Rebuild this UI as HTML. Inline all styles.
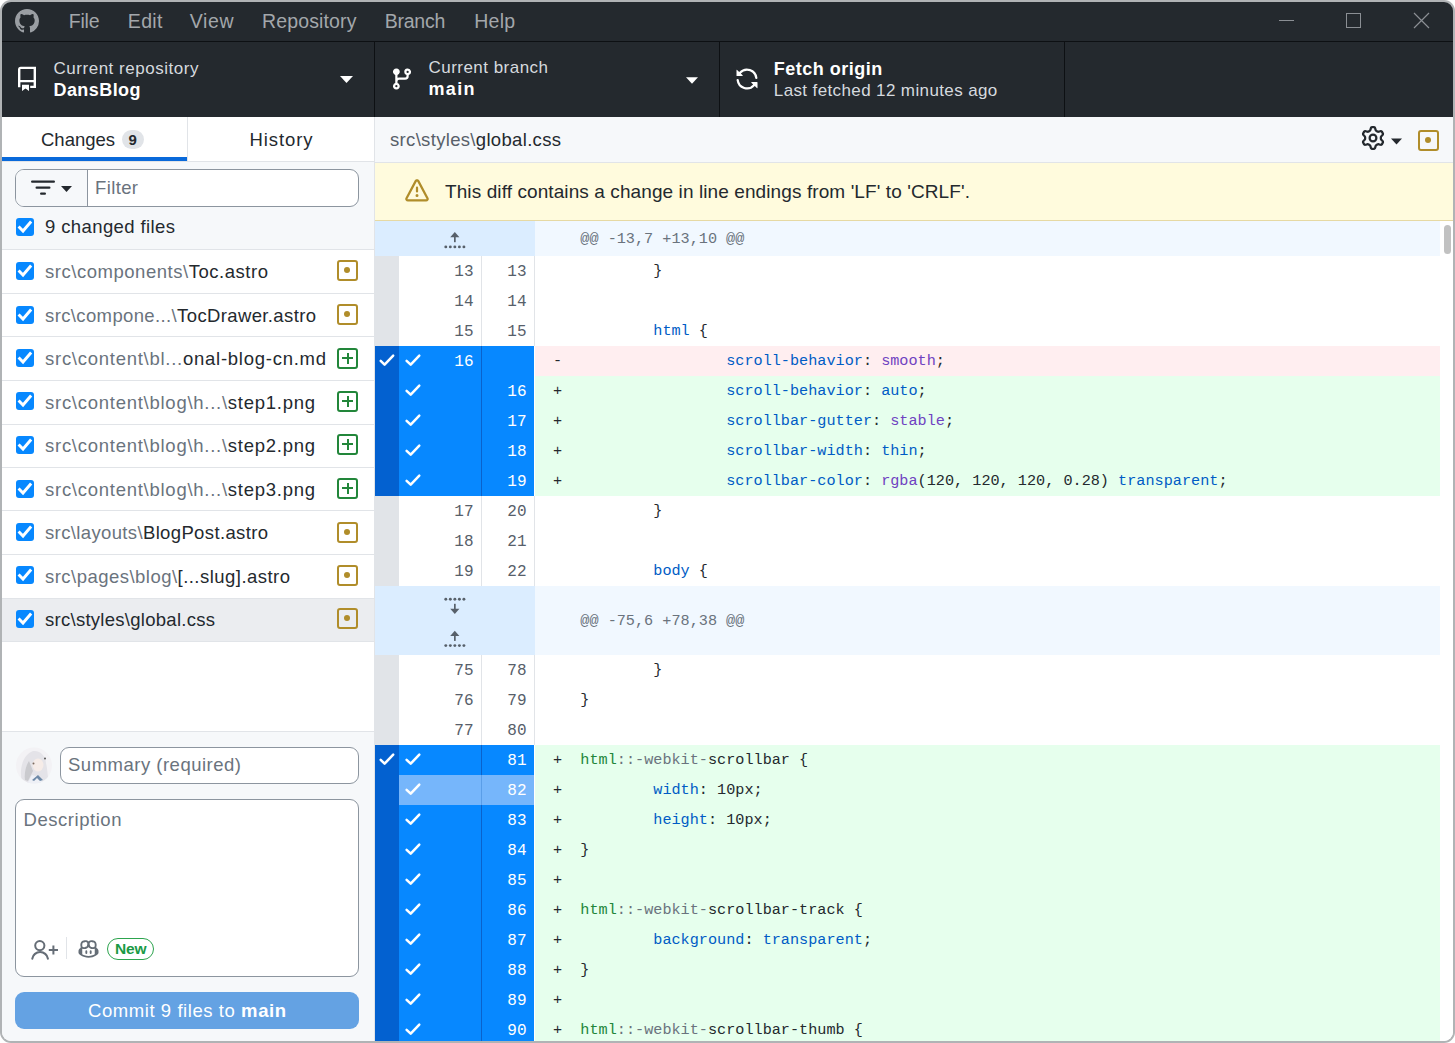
<!DOCTYPE html>
<html><head><meta charset="utf-8"><style>
html,body{margin:0;padding:0;}
body{width:1455px;height:1043px;overflow:hidden;background:#ffffff;position:relative;font-family:'Liberation Sans', sans-serif;}
#frame{position:absolute;left:0;top:0;width:1455px;height:1043px;border-radius:11px;background:#b0b3b5;overflow:hidden;}
#win{position:absolute;left:0;top:0;width:1455px;height:1043px;clip-path:inset(2px round 9px);}
#win>*{}
</style></head><body><div id="frame"><div id="win">
<div style="position:absolute;left:2px;top:2px;width:1451px;height:39px;background:#24292e;"></div>
<div style="position:absolute;left:2px;top:41px;width:1451px;height:1px;background:#0d1013;"></div>
<div style="position:absolute;left:2px;top:42px;width:1451px;height:75px;background:#24292e;"></div>
<div style="position:absolute;left:374px;top:42px;width:1px;height:75px;background:#0d1013;"></div>
<div style="position:absolute;left:719px;top:42px;width:1px;height:75px;background:#0d1013;"></div>
<div style="position:absolute;left:1064px;top:42px;width:1px;height:75px;background:#0d1013;"></div>
<svg style="position:absolute;left:15px;top:9px;" width="24" height="24" viewBox="0 0 16 16"><path fill="#9a9ea3" d="M8 0C3.58 0 0 3.58 0 8c0 3.54 2.29 6.53 5.47 7.59.4.07.55-.17.55-.38 0-.19-.01-.82-.01-1.49-2.01.37-2.530-.49-2.69-.94-.09-.23-.48-.94-.82-1.13-.28-.15-.68-.52-.01-.53.63-.01 1.08.58 1.230.82.72 1.21 1.87.87 2.33.66.07-.52.28-.87.51-1.07-1.78-.2-3.64-.89-3.64-3.95 0-.87.31-1.59.82-2.15-.08-.2-.36-1.02.08-2.12 0 0 .67-.21 2.2.82.64-.18 1.32-.27 2-.27.68 0 1.36.09 2 .27 1.53-1.04 2.2-.82 2.2-.82.44 1.1.16 1.92.08 2.12.51.56.82 1.27.82 2.15 0 3.07-1.87 3.75-3.65 3.95.29.25.54.73.54 1.48 0 1.07-.01 1.93-.01 2.2 0 .21.15.46.55.38A8.013 8.013 0 0016 8c0-4.42-3.58-8-8-8z"/></svg>
<div style="position:absolute;left:1279px;top:20px;width:15px;height:1px;background:#8b8f94"></div>
<div style="position:absolute;left:1346px;top:13px;width:13px;height:13px;border:1px solid #8b8f94"></div>
<svg style="position:absolute;left:1413px;top:12px;" width="17" height="17" viewBox="0 0 17 17"><path d="M1 1L16 16M16 1L1 16" stroke="#8b8f94" stroke-width="1.2"/></svg>
<svg style="position:absolute;left:17px;top:66px;" width="20" height="26" viewBox="0 0 20 26"><path d="M1 21.3V3.6Q1 0.7 3.8 0.7H19V22H13.2V19.7H16.6V16.2H3.4V21.3Z M3.4 3.1V14H16.6V3.1Z" fill="#fff" fill-rule="evenodd"/><path d="M5 18.7H12V25L8.5 22.6L5 25Z" fill="#fff"/></svg>
<svg style="position:absolute;left:390px;top:67px;" width="24" height="24" viewBox="0 0 16 16"><path fill="#fff" d="M11.75 2.5a.75.75 0 100 1.5.75.75 0 000-1.5zm-2.25.75a2.25 2.25 0 113 2.122V6A2.5 2.5 0 0110 8.5H6a1 1 0 00-1 1v1.128a2.251 2.251 0 11-1.5 0V5.372a2.25 2.25 0 111.5 0v1.836A2.492 2.492 0 016 7h4a1 1 0 001-1v-.628A2.25 2.25 0 019.5 3.25zM4.25 12a.75.75 0 100 1.5.75.75 0 000-1.5zM3.5 3.25a.75.75 0 111.5 0 .75.75 0 01-1.5 0z"/></svg>
<svg style="position:absolute;left:735px;top:67px;" width="24" height="24" viewBox="0 0 16 16"><path fill="#fff" d="M1.705 8.005a.75.75 0 0 1 .834.656 5.5 5.5 0 0 0 9.592 2.97l-1.204-1.204a.25.25 0 0 1 .177-.427h3.646a.25.25 0 0 1 .25.25v3.646a.25.25 0 0 1-.427.177l-1.38-1.38A7.002 7.002 0 0 1 1.05 8.84a.75.75 0 0 1 .656-.834ZM8 2.5a5.487 5.487 0 0 0-4.131 1.869l1.204 1.204A.25.25 0 0 1 4.896 6H1.25A.25.25 0 0 1 1 5.75V2.104a.25.25 0 0 1 .427-.177l1.38 1.38A7.002 7.002 0 0 1 14.95 7.16a.75.75 0 0 1-1.49.178A5.5 5.5 0 0 0 8 2.5Z"/></svg>
<svg style="position:absolute;left:340px;top:76px;" width="13" height="7" viewBox="0 0 13 7"><path d="M0 0h13L6.5 7z" fill="#fff"/></svg>
<svg style="position:absolute;left:686px;top:77px;" width="12" height="7" viewBox="0 0 13 7"><path d="M0 0h13L6.5 7z" fill="#fff"/></svg>
<div style="position:absolute;left:2px;top:117px;width:372px;height:924px;background:#ffffff;"></div>
<div style="position:absolute;left:2px;top:117px;width:372px;height:44px;background:#ffffff;"></div>
<div style="position:absolute;left:187px;top:117px;width:1px;height:44px;background:#e1e4e8;"></div>
<div style="position:absolute;left:2px;top:161px;width:372px;height:1px;background:#e1e4e8;"></div>
<div style="position:absolute;left:2px;top:157px;width:185px;height:4px;background:#0969da;"></div>
<div style="position:absolute;left:122px;top:130px;width:22px;height:19px;border-radius:10px;background:#e1e4e8"></div>
<div style="position:absolute;left:2px;top:162px;width:372px;height:87px;background:#f6f8fa;"></div>
<div style="position:absolute;left:2px;top:249px;width:372px;height:1px;background:#e1e4e8;"></div>
<div style="position:absolute;left:15px;top:169px;width:342px;height:36px;border:1px solid #8c959f;border-radius:9px;background:#fff;overflow:hidden"><div style="position:absolute;left:0;top:0;width:71px;height:36px;background:#f6f8fa;border-right:1px solid #8c959f"></div></div>
<svg style="position:absolute;left:31px;top:176px;" width="24" height="24" viewBox="0 0 16 16"><path fill="#24292e" d="M.75 3h14.5a.75.75 0 0 1 0 1.5H.75a.75.75 0 0 1 0-1.5ZM3 7.75A.75.75 0 0 1 3.75 7h8.5a.75.75 0 0 1 0 1.5h-8.5A.75.75 0 0 1 3 7.75Zm3 4a.75.75 0 0 1 .75-.75h2.5a.75.75 0 0 1 0 1.5h-2.5a.75.75 0 0 1-.75-.75Z"/></svg>
<svg style="position:absolute;left:61px;top:186px;" width="11" height="6" viewBox="0 0 13 7"><path d="M0 0h13L6.5 7z" fill="#24292e"/></svg>
<div style="position:absolute;left:16px;top:218px;width:18px;height:18px;border-radius:3px;background:#0788ff"></div>
<svg style="position:absolute;left:16px;top:218px;" width="18" height="18" viewBox="0 0 18 18"><path d="M3.6 9.6L7 13L14.2 4.6" fill="none" stroke="#fff" stroke-width="2.9" stroke-linecap="square" stroke-linejoin="miter"/></svg>
<div style="position:absolute;left:2px;top:251px;width:372px;height:42px;background:#ffffff;"></div>
<div style="position:absolute;left:2px;top:293px;width:372px;height:1px;background:#e1e4e8;"></div>
<div style="position:absolute;left:16px;top:262px;width:18px;height:18px;border-radius:3px;background:#0788ff"></div>
<svg style="position:absolute;left:16px;top:262px;" width="18" height="18" viewBox="0 0 18 18"><path d="M3.6 9.6L7 13L14.2 4.6" fill="none" stroke="#fff" stroke-width="2.9" stroke-linecap="square" stroke-linejoin="miter"/></svg>
<div style="position:absolute;left:337px;top:260px;width:17px;height:17px;border:2px solid #b08d2a;border-radius:3px"></div>
<div style="position:absolute;left:344px;top:267px;width:6px;height:6px;border-radius:50%;background:#b08d2a"></div>
<div style="position:absolute;left:2px;top:294px;width:372px;height:42px;background:#ffffff;"></div>
<div style="position:absolute;left:2px;top:336px;width:372px;height:1px;background:#e1e4e8;"></div>
<div style="position:absolute;left:16px;top:306px;width:18px;height:18px;border-radius:3px;background:#0788ff"></div>
<svg style="position:absolute;left:16px;top:306px;" width="18" height="18" viewBox="0 0 18 18"><path d="M3.6 9.6L7 13L14.2 4.6" fill="none" stroke="#fff" stroke-width="2.9" stroke-linecap="square" stroke-linejoin="miter"/></svg>
<div style="position:absolute;left:337px;top:304px;width:17px;height:17px;border:2px solid #b08d2a;border-radius:3px"></div>
<div style="position:absolute;left:344px;top:311px;width:6px;height:6px;border-radius:50%;background:#b08d2a"></div>
<div style="position:absolute;left:2px;top:337px;width:372px;height:43px;background:#ffffff;"></div>
<div style="position:absolute;left:2px;top:380px;width:372px;height:1px;background:#e1e4e8;"></div>
<div style="position:absolute;left:16px;top:349px;width:18px;height:18px;border-radius:3px;background:#0788ff"></div>
<svg style="position:absolute;left:16px;top:349px;" width="18" height="18" viewBox="0 0 18 18"><path d="M3.6 9.6L7 13L14.2 4.6" fill="none" stroke="#fff" stroke-width="2.9" stroke-linecap="square" stroke-linejoin="miter"/></svg>
<div style="position:absolute;left:337px;top:348px;width:17px;height:17px;border:2px solid #22863a;border-radius:3px"></div>
<div style="position:absolute;left:342px;top:357px;width:11px;height:2px;background:#22863a"></div>
<div style="position:absolute;left:346.5px;top:352.5px;width:2px;height:11px;background:#22863a"></div>
<div style="position:absolute;left:2px;top:381px;width:372px;height:43px;background:#ffffff;"></div>
<div style="position:absolute;left:2px;top:424px;width:372px;height:1px;background:#e1e4e8;"></div>
<div style="position:absolute;left:16px;top:392px;width:18px;height:18px;border-radius:3px;background:#0788ff"></div>
<svg style="position:absolute;left:16px;top:392px;" width="18" height="18" viewBox="0 0 18 18"><path d="M3.6 9.6L7 13L14.2 4.6" fill="none" stroke="#fff" stroke-width="2.9" stroke-linecap="square" stroke-linejoin="miter"/></svg>
<div style="position:absolute;left:337px;top:391px;width:17px;height:17px;border:2px solid #22863a;border-radius:3px"></div>
<div style="position:absolute;left:342px;top:400px;width:11px;height:2px;background:#22863a"></div>
<div style="position:absolute;left:346.5px;top:395.5px;width:2px;height:11px;background:#22863a"></div>
<div style="position:absolute;left:2px;top:425px;width:372px;height:42px;background:#ffffff;"></div>
<div style="position:absolute;left:2px;top:467px;width:372px;height:1px;background:#e1e4e8;"></div>
<div style="position:absolute;left:16px;top:436px;width:18px;height:18px;border-radius:3px;background:#0788ff"></div>
<svg style="position:absolute;left:16px;top:436px;" width="18" height="18" viewBox="0 0 18 18"><path d="M3.6 9.6L7 13L14.2 4.6" fill="none" stroke="#fff" stroke-width="2.9" stroke-linecap="square" stroke-linejoin="miter"/></svg>
<div style="position:absolute;left:337px;top:434px;width:17px;height:17px;border:2px solid #22863a;border-radius:3px"></div>
<div style="position:absolute;left:342px;top:443px;width:11px;height:2px;background:#22863a"></div>
<div style="position:absolute;left:346.5px;top:438.5px;width:2px;height:11px;background:#22863a"></div>
<div style="position:absolute;left:2px;top:468px;width:372px;height:42px;background:#ffffff;"></div>
<div style="position:absolute;left:2px;top:510px;width:372px;height:1px;background:#e1e4e8;"></div>
<div style="position:absolute;left:16px;top:480px;width:18px;height:18px;border-radius:3px;background:#0788ff"></div>
<svg style="position:absolute;left:16px;top:480px;" width="18" height="18" viewBox="0 0 18 18"><path d="M3.6 9.6L7 13L14.2 4.6" fill="none" stroke="#fff" stroke-width="2.9" stroke-linecap="square" stroke-linejoin="miter"/></svg>
<div style="position:absolute;left:337px;top:478px;width:17px;height:17px;border:2px solid #22863a;border-radius:3px"></div>
<div style="position:absolute;left:342px;top:487px;width:11px;height:2px;background:#22863a"></div>
<div style="position:absolute;left:346.5px;top:482.5px;width:2px;height:11px;background:#22863a"></div>
<div style="position:absolute;left:2px;top:511px;width:372px;height:43px;background:#ffffff;"></div>
<div style="position:absolute;left:2px;top:554px;width:372px;height:1px;background:#e1e4e8;"></div>
<div style="position:absolute;left:16px;top:523px;width:18px;height:18px;border-radius:3px;background:#0788ff"></div>
<svg style="position:absolute;left:16px;top:523px;" width="18" height="18" viewBox="0 0 18 18"><path d="M3.6 9.6L7 13L14.2 4.6" fill="none" stroke="#fff" stroke-width="2.9" stroke-linecap="square" stroke-linejoin="miter"/></svg>
<div style="position:absolute;left:337px;top:522px;width:17px;height:17px;border:2px solid #b08d2a;border-radius:3px"></div>
<div style="position:absolute;left:344px;top:529px;width:6px;height:6px;border-radius:50%;background:#b08d2a"></div>
<div style="position:absolute;left:2px;top:555px;width:372px;height:43px;background:#ffffff;"></div>
<div style="position:absolute;left:2px;top:598px;width:372px;height:1px;background:#e1e4e8;"></div>
<div style="position:absolute;left:16px;top:566px;width:18px;height:18px;border-radius:3px;background:#0788ff"></div>
<svg style="position:absolute;left:16px;top:566px;" width="18" height="18" viewBox="0 0 18 18"><path d="M3.6 9.6L7 13L14.2 4.6" fill="none" stroke="#fff" stroke-width="2.9" stroke-linecap="square" stroke-linejoin="miter"/></svg>
<div style="position:absolute;left:337px;top:565px;width:17px;height:17px;border:2px solid #b08d2a;border-radius:3px"></div>
<div style="position:absolute;left:344px;top:572px;width:6px;height:6px;border-radius:50%;background:#b08d2a"></div>
<div style="position:absolute;left:2px;top:599px;width:372px;height:42px;background:#ebedf0;"></div>
<div style="position:absolute;left:2px;top:641px;width:372px;height:1px;background:#e1e4e8;"></div>
<div style="position:absolute;left:16px;top:610px;width:18px;height:18px;border-radius:3px;background:#0788ff"></div>
<svg style="position:absolute;left:16px;top:610px;" width="18" height="18" viewBox="0 0 18 18"><path d="M3.6 9.6L7 13L14.2 4.6" fill="none" stroke="#fff" stroke-width="2.9" stroke-linecap="square" stroke-linejoin="miter"/></svg>
<div style="position:absolute;left:337px;top:608px;width:17px;height:17px;border:2px solid #b08d2a;border-radius:3px"></div>
<div style="position:absolute;left:344px;top:615px;width:6px;height:6px;border-radius:50%;background:#b08d2a"></div>
<div style="position:absolute;left:2px;top:731px;width:372px;height:1px;background:#e1e4e8;"></div>
<div style="position:absolute;left:2px;top:732px;width:372px;height:309px;background:#f6f8fa;"></div>
<svg style="position:absolute;left:16px;top:747px" width="36" height="37" viewBox="0 0 36 37"><defs><clipPath id="av"><circle cx="18" cy="18.5" r="18"/></clipPath></defs><g clip-path="url(#av)"><rect width="36" height="37" fill="#f3f2f5"/><path d="M6 34C3 24 6 8 17 4C24 3 30 9 30 16C32 24 31 30 34 36H6Z" fill="#e4e3e8"/><path d="M9 33C8 26 10 18 13 14L17 24L12 34Z" fill="#cacace"/><ellipse cx="22" cy="18" rx="5.5" ry="6.5" fill="#f6ece8"/><path d="M11 37L16 28L23 30L29 37Z" fill="#eef0f6"/><path d="M22 28L27 33L24 34L21 31L18 34L16 33Z" fill="#6f8aa8"/><circle cx="17.5" cy="16.5" r="1" fill="#7a6a60"/><circle cx="29" cy="11.5" r="1" fill="#555"/></g></svg>
<div style="position:absolute;left:60px;top:747px;width:297px;height:35px;border:1px solid #8c959f;border-radius:9px;background:#fff"></div>
<div style="position:absolute;left:15px;top:799px;width:342px;height:176px;border:1px solid #8c959f;border-radius:9px;background:#fff"></div>
<svg style="position:absolute;left:0;top:0" width="1455" height="1043" viewBox="0 0 1455 1043"><circle cx="39.8" cy="945.6" r="4.6" fill="none" stroke="#656d76" stroke-width="2"/><path d="M32.3 958.6A7.9 7.9 0 0 1 47.9 958.6" fill="none" stroke="#656d76" stroke-width="2.1" stroke-linecap="round"/><path d="M48.8 950H58M53.4 945.4V954.6" stroke="#656d76" stroke-width="2"/></svg>
<div style="position:absolute;left:66px;top:937px;width:1px;height:22px;background:#e1e4e8;"></div>
<svg style="position:absolute;left:78px;top:939px;" width="21" height="20" viewBox="0 0 16 16"><path fill="#656d76" d="M7.998 15.035c-4.562 0-7.873-2.914-7.998-3.749V9.338c.085-.628.677-1.686 1.588-2.065.013-.07.024-.143.036-.218.029-.183.06-.384.126-.612-.201-.508-.254-1.084-.254-1.656 0-.87.128-1.769.693-2.484.579-.733 1.494-1.124 2.724-1.261 1.206-.134 2.262.034 2.944.765.05.053.096.108.139.165.044-.057.094-.112.143-.165.682-.731 1.738-.899 2.944-.765 1.23.137 2.145.528 2.724 1.261.566.715.693 1.614.693 2.484 0 .572-.053 1.148-.254 1.656.066.228.098.429.126.612.012.076.024.148.037.218.924.385 1.522 1.471 1.591 2.095v1.872c0 .766-3.351 3.795-8.002 3.795Zm0-1.485c2.28 0 4.584-1.11 5.002-1.433V7.862l-.023-.116c-.49.21-1.075.291-1.727.291-1.146 0-2.059-.327-2.710-.991A3.222 3.222 0 0 1 8 6.303a3.24 3.24 0 0 1-.544.743c-.65.664-1.563.991-2.71.991-.652 0-1.236-.081-1.727-.291l-.023.116v4.255c.419.323 2.722 1.433 5.002 1.433ZM6.762 2.83c-.193-.206-.637-.413-1.682-.297-1.019.113-1.479.404-1.713.7-.247.312-.369.789-.369 1.554 0 .793.129 1.171.308 1.371.162.181.519.379 1.442.379.853 0 1.339-.235 1.638-.54.315-.322.527-.827.617-1.553.117-.935-.037-1.395-.241-1.614Zm4.155-.297c-1.044-.116-1.488.091-1.681.297-.204.219-.359.679-.242 1.614.091.726.303 1.231.618 1.553.299.305.784.54 1.638.54.922 0 1.28-.198 1.442-.379.179-.2.308-.578.308-1.371 0-.765-.123-1.242-.37-1.554-.233-.296-.693-.587-1.713-.7Z M6.25 9.037a.75.75 0 0 1 .75.75v1.501a.75.75 0 0 1-1.5 0V9.787a.75.75 0 0 1 .75-.75Zm4.25.75v1.501a.75.75 0 0 1-1.5 0V9.787a.75.75 0 0 1 1.5 0Z"/></svg>
<div style="position:absolute;left:107px;top:938px;width:45px;height:20px;border:1px solid #2da44e;border-radius:11px"></div>
<div style="position:absolute;left:15px;top:992px;width:344px;height:37px;border-radius:9px;background:#64a2e3"></div>
<div style="position:absolute;left:374px;top:117px;width:1px;height:924px;background:#e1e4e8;"></div>
<div style="position:absolute;left:375px;top:117px;width:1078px;height:45px;background:#f6f8fa;"></div>
<div style="position:absolute;left:375px;top:162px;width:1078px;height:1px;background:#e1e4e8;"></div>
<svg style="position:absolute;left:1361px;top:126px;" width="24" height="24" viewBox="0 0 16 16"><path fill="#24292e" d="M8 0a8.2 8.2 0 0 1 .701.031C9.444.095 9.99.645 10.16 1.29l.288 1.107c.018.066.079.158.212.224.231.114.454.243.668.386.123.082.233.09.299.071l1.103-.303c.644-.176 1.392.021 1.82.63.27.385.506.792.704 1.218.315.675.111 1.422-.364 1.891l-.814.806c-.049.048-.098.147-.088.294.016.257.016.515 0 .772-.01.147.038.246.088.294l.814.806c.475.469.679 1.216.364 1.891a7.977 7.977 0 0 1-.704 1.217c-.428.61-1.176.807-1.82.63l-1.102-.302c-.067-.019-.177-.011-.3.071a5.909 5.909 0 0 1-.668.386c-.133.066-.194.158-.211.224l-.29 1.106c-.168.646-.715 1.196-1.458 1.26a8.006 8.006 0 0 1-1.402 0c-.743-.064-1.289-.614-1.458-1.26l-.289-1.106c-.018-.066-.079-.158-.212-.224a5.738 5.738 0 0 1-.668-.386c-.123-.082-.233-.09-.299-.071l-1.103.303c-.644.176-1.392-.021-1.820-.63a8.12 8.12 0 0 1-.704-1.218c-.315-.675-.111-1.422.363-1.891l.815-.806c.05-.048.098-.147.088-.294a6.214 6.214 0 0 1 0-.772c.01-.147-.038-.246-.088-.294l-.815-.806C.635 6.045.431 5.298.746 4.623a7.92 7.920 0 0 1 .704-1.217c.428-.61 1.176-.807 1.82-.63l1.102.302c.067.019.177.011.3-.071.214-.143.437-.272.668-.386.133-.066.194-.158.211-.224l.29-1.106C6.009.645 6.556.095 7.299.03 7.53.01 7.764 0 8 0Zm-.571 1.525c-.036.003-.108.036-.137.146l-.289 1.105c-.147.561-.549.967-.998 1.189-.173.086-.34.183-.5.29-.417.278-.97.423-1.529.27l-1.103-.303c-.109-.03-.175.016-.195.045-.22.312-.412.644-.573.99-.014.031-.021.11.059.19l.815.806c.411.406.562.957.53 1.456a4.709 4.709 0 0 0 0 .582c.032.499-.119 1.05-.53 1.456l-.815.806c-.081.08-.073.159-.059.19.162.346.353.677.573.989.02.03.085.076.195.046l1.102-.303c.56-.153 1.113-.008 1.53.27.161.107.328.204.501.29.447.222.85.629.997 1.189l.289 1.105c.029.109.101.143.137.146a6.6 6.6 0 0 0 1.142 0c.036-.003.108-.036.137-.146l.289-1.105c.147-.561.549-.967.998-1.189.173-.086.34-.183.5-.29.417-.278.97-.423 1.529-.27l1.103.303c.109.029.175-.016.195-.045.22-.313.411-.644.573-.99.014-.031.021-.11-.059-.19l-.815-.806c-.411-.406-.562-.957-.53-1.456a4.709 4.709 0 0 0 0-.582c-.032-.499.119-1.05.53-1.456l.815-.806c.081-.08.073-.159.059-.19a6.464 6.464 0 0 0-.573-.989c-.02-.03-.085-.076-.195-.046l-1.102.303c-.56.153-1.113.008-1.53-.27a4.44 4.44 0 0 0-.501-.29c-.447-.222-.85-.629-.997-1.189l-.289-1.105c-.029-.11-.101-.143-.137-.146a6.6 6.6 0 0 0-1.142 0ZM11 8a3 3 0 1 1-6 0 3 3 0 0 1 6 0ZM9.5 8a1.5 1.5 0 1 0-3.001.001A1.5 1.5 0 0 0 9.5 8Z"/></svg>
<svg style="position:absolute;left:1391px;top:138px;" width="11" height="7" viewBox="0 0 13 7"><path d="M0 0h13L6.5 7z" fill="#24292e"/></svg>
<div style="position:absolute;left:1418px;top:130px;width:17px;height:17px;border:2px solid #b08d2a;border-radius:3px"></div>
<div style="position:absolute;left:1425px;top:137px;width:6px;height:6px;border-radius:50%;background:#b08d2a"></div>
<div style="position:absolute;left:375px;top:163px;width:1078px;height:57px;background:#fffbdd;"></div>
<div style="position:absolute;left:375px;top:220px;width:1078px;height:1px;background:#e6d9a3;"></div>
<svg style="position:absolute;left:405px;top:179px;" width="24" height="24" viewBox="0 0 16 16"><path fill="#b08d2a" d="M6.457 1.047c.659-1.234 2.427-1.234 3.086 0l6.082 11.378A1.75 1.75 0 0 1 14.082 15H1.918a1.75 1.75 0 0 1-1.543-2.575Zm1.763.707a.25.25 0 0 0-.44 0L1.698 13.132a.25.25 0 0 0 .22.368h12.164a.25.25 0 0 0 .22-.368Zm.53 3.996v2.5a.75.75 0 0 1-1.5 0v-2.5a.75.75 0 0 1 1.5 0ZM9 11a1 1 0 1 1-2 0 1 1 0 0 1 2 0Z"/></svg>
<div style="position:absolute;left:375px;top:221px;width:1078px;height:820px;background:#ffffff;"></div>
<div style="position:absolute;left:1440px;top:221px;width:13px;height:820px;background:#ffffff;"></div>
<div style="position:absolute;left:1444px;top:225px;width:7px;height:29px;border-radius:4px;background:#c1c1c1"></div>
<div style="position:absolute;left:375px;top:221px;width:160px;height:35px;background:#dbedff;"></div>
<div style="position:absolute;left:535px;top:221px;width:905px;height:35px;background:#f1f8ff;"></div>
<svg style="position:absolute;left:0;top:0" width="1455" height="1043" viewBox="0 0 1455 1043"><path d="M450.2 237.30L459.4 237.30L454.8 232.00Z" fill="#57606a"/><rect x="454" y="237.00" width="1.7" height="5.2" fill="#57606a"/><circle cx="445.80" cy="246.90" r="1.45" fill="#57606a"/><circle cx="450.33" cy="246.90" r="1.45" fill="#57606a"/><circle cx="454.86" cy="246.90" r="1.45" fill="#57606a"/><circle cx="459.39" cy="246.90" r="1.45" fill="#57606a"/><circle cx="463.92" cy="246.90" r="1.45" fill="#57606a"/></svg>
<div style="position:absolute;left:375px;top:256px;width:24px;height:30px;background:#e1e4e8;"></div>
<div style="position:absolute;left:399px;top:256px;width:82px;height:30px;background:#ffffff;"></div>
<div style="position:absolute;left:481px;top:256px;width:1px;height:30px;background:#e1e4e8;"></div>
<div style="position:absolute;left:482px;top:256px;width:52px;height:30px;background:#ffffff;"></div>
<div style="position:absolute;left:534px;top:256px;width:1px;height:30px;background:#e1e4e8;"></div>
<div style="position:absolute;left:535px;top:256px;width:905px;height:30px;background:#ffffff;"></div>
<div style="position:absolute;left:375px;top:286px;width:24px;height:30px;background:#e1e4e8;"></div>
<div style="position:absolute;left:399px;top:286px;width:82px;height:30px;background:#ffffff;"></div>
<div style="position:absolute;left:481px;top:286px;width:1px;height:30px;background:#e1e4e8;"></div>
<div style="position:absolute;left:482px;top:286px;width:52px;height:30px;background:#ffffff;"></div>
<div style="position:absolute;left:534px;top:286px;width:1px;height:30px;background:#e1e4e8;"></div>
<div style="position:absolute;left:535px;top:286px;width:905px;height:30px;background:#ffffff;"></div>
<div style="position:absolute;left:375px;top:316px;width:24px;height:30px;background:#e1e4e8;"></div>
<div style="position:absolute;left:399px;top:316px;width:82px;height:30px;background:#ffffff;"></div>
<div style="position:absolute;left:481px;top:316px;width:1px;height:30px;background:#e1e4e8;"></div>
<div style="position:absolute;left:482px;top:316px;width:52px;height:30px;background:#ffffff;"></div>
<div style="position:absolute;left:534px;top:316px;width:1px;height:30px;background:#e1e4e8;"></div>
<div style="position:absolute;left:535px;top:316px;width:905px;height:30px;background:#ffffff;"></div>
<div style="position:absolute;left:375px;top:346px;width:24px;height:30px;background:#0361d0;"></div>
<div style="position:absolute;left:399px;top:346px;width:82px;height:30px;background:#0788ff;"></div>
<div style="position:absolute;left:481px;top:346px;width:1px;height:30px;background:#0a62cc;"></div>
<div style="position:absolute;left:482px;top:346px;width:52px;height:30px;background:#0788ff;"></div>
<div style="position:absolute;left:535px;top:346px;width:905px;height:30px;background:#ffeef0;"></div>
<svg style="position:absolute;left:400px;top:346px;" width="24" height="30" viewBox="0 0 24 30"><path d="M6.6 14.8L10.7 18.7L19.3 9.6" fill="none" stroke="#fff" stroke-width="2.5" stroke-linecap="round" stroke-linejoin="round"/></svg>
<div style="position:absolute;left:375px;top:376px;width:24px;height:30px;background:#0361d0;"></div>
<div style="position:absolute;left:399px;top:376px;width:82px;height:30px;background:#0788ff;"></div>
<div style="position:absolute;left:481px;top:376px;width:1px;height:30px;background:#0a62cc;"></div>
<div style="position:absolute;left:482px;top:376px;width:52px;height:30px;background:#0788ff;"></div>
<div style="position:absolute;left:535px;top:376px;width:905px;height:30px;background:#e6ffed;"></div>
<svg style="position:absolute;left:400px;top:376px;" width="24" height="30" viewBox="0 0 24 30"><path d="M6.6 14.8L10.7 18.7L19.3 9.6" fill="none" stroke="#fff" stroke-width="2.5" stroke-linecap="round" stroke-linejoin="round"/></svg>
<div style="position:absolute;left:375px;top:406px;width:24px;height:30px;background:#0361d0;"></div>
<div style="position:absolute;left:399px;top:406px;width:82px;height:30px;background:#0788ff;"></div>
<div style="position:absolute;left:481px;top:406px;width:1px;height:30px;background:#0a62cc;"></div>
<div style="position:absolute;left:482px;top:406px;width:52px;height:30px;background:#0788ff;"></div>
<div style="position:absolute;left:535px;top:406px;width:905px;height:30px;background:#e6ffed;"></div>
<svg style="position:absolute;left:400px;top:406px;" width="24" height="30" viewBox="0 0 24 30"><path d="M6.6 14.8L10.7 18.7L19.3 9.6" fill="none" stroke="#fff" stroke-width="2.5" stroke-linecap="round" stroke-linejoin="round"/></svg>
<div style="position:absolute;left:375px;top:436px;width:24px;height:30px;background:#0361d0;"></div>
<div style="position:absolute;left:399px;top:436px;width:82px;height:30px;background:#0788ff;"></div>
<div style="position:absolute;left:481px;top:436px;width:1px;height:30px;background:#0a62cc;"></div>
<div style="position:absolute;left:482px;top:436px;width:52px;height:30px;background:#0788ff;"></div>
<div style="position:absolute;left:535px;top:436px;width:905px;height:30px;background:#e6ffed;"></div>
<svg style="position:absolute;left:400px;top:436px;" width="24" height="30" viewBox="0 0 24 30"><path d="M6.6 14.8L10.7 18.7L19.3 9.6" fill="none" stroke="#fff" stroke-width="2.5" stroke-linecap="round" stroke-linejoin="round"/></svg>
<div style="position:absolute;left:375px;top:466px;width:24px;height:30px;background:#0361d0;"></div>
<div style="position:absolute;left:399px;top:466px;width:82px;height:30px;background:#0788ff;"></div>
<div style="position:absolute;left:481px;top:466px;width:1px;height:30px;background:#0a62cc;"></div>
<div style="position:absolute;left:482px;top:466px;width:52px;height:30px;background:#0788ff;"></div>
<div style="position:absolute;left:535px;top:466px;width:905px;height:30px;background:#e6ffed;"></div>
<svg style="position:absolute;left:400px;top:466px;" width="24" height="30" viewBox="0 0 24 30"><path d="M6.6 14.8L10.7 18.7L19.3 9.6" fill="none" stroke="#fff" stroke-width="2.5" stroke-linecap="round" stroke-linejoin="round"/></svg>
<div style="position:absolute;left:375px;top:496px;width:24px;height:30px;background:#e1e4e8;"></div>
<div style="position:absolute;left:399px;top:496px;width:82px;height:30px;background:#ffffff;"></div>
<div style="position:absolute;left:481px;top:496px;width:1px;height:30px;background:#e1e4e8;"></div>
<div style="position:absolute;left:482px;top:496px;width:52px;height:30px;background:#ffffff;"></div>
<div style="position:absolute;left:534px;top:496px;width:1px;height:30px;background:#e1e4e8;"></div>
<div style="position:absolute;left:535px;top:496px;width:905px;height:30px;background:#ffffff;"></div>
<div style="position:absolute;left:375px;top:526px;width:24px;height:30px;background:#e1e4e8;"></div>
<div style="position:absolute;left:399px;top:526px;width:82px;height:30px;background:#ffffff;"></div>
<div style="position:absolute;left:481px;top:526px;width:1px;height:30px;background:#e1e4e8;"></div>
<div style="position:absolute;left:482px;top:526px;width:52px;height:30px;background:#ffffff;"></div>
<div style="position:absolute;left:534px;top:526px;width:1px;height:30px;background:#e1e4e8;"></div>
<div style="position:absolute;left:535px;top:526px;width:905px;height:30px;background:#ffffff;"></div>
<div style="position:absolute;left:375px;top:556px;width:24px;height:30px;background:#e1e4e8;"></div>
<div style="position:absolute;left:399px;top:556px;width:82px;height:30px;background:#ffffff;"></div>
<div style="position:absolute;left:481px;top:556px;width:1px;height:30px;background:#e1e4e8;"></div>
<div style="position:absolute;left:482px;top:556px;width:52px;height:30px;background:#ffffff;"></div>
<div style="position:absolute;left:534px;top:556px;width:1px;height:30px;background:#e1e4e8;"></div>
<div style="position:absolute;left:535px;top:556px;width:905px;height:30px;background:#ffffff;"></div>
<div style="position:absolute;left:375px;top:586px;width:160px;height:69px;background:#dbedff;"></div>
<div style="position:absolute;left:535px;top:586px;width:905px;height:69px;background:#f1f8ff;"></div>
<svg style="position:absolute;left:0;top:0" width="1455" height="1043" viewBox="0 0 1455 1043"><path d="M450.2 608.80L459.4 608.80L454.8 614.00Z" fill="#57606a"/><rect x="454" y="603.80" width="1.7" height="5.2" fill="#57606a"/><circle cx="445.80" cy="599.20" r="1.45" fill="#57606a"/><circle cx="450.33" cy="599.20" r="1.45" fill="#57606a"/><circle cx="454.86" cy="599.20" r="1.45" fill="#57606a"/><circle cx="459.39" cy="599.20" r="1.45" fill="#57606a"/><circle cx="463.92" cy="599.20" r="1.45" fill="#57606a"/></svg>
<svg style="position:absolute;left:0;top:0" width="1455" height="1043" viewBox="0 0 1455 1043"><path d="M450.2 636.00L459.4 636.00L454.8 630.70Z" fill="#57606a"/><rect x="454" y="635.70" width="1.7" height="5.2" fill="#57606a"/><circle cx="445.80" cy="645.60" r="1.45" fill="#57606a"/><circle cx="450.33" cy="645.60" r="1.45" fill="#57606a"/><circle cx="454.86" cy="645.60" r="1.45" fill="#57606a"/><circle cx="459.39" cy="645.60" r="1.45" fill="#57606a"/><circle cx="463.92" cy="645.60" r="1.45" fill="#57606a"/></svg>
<div style="position:absolute;left:375px;top:655px;width:24px;height:30px;background:#e1e4e8;"></div>
<div style="position:absolute;left:399px;top:655px;width:82px;height:30px;background:#ffffff;"></div>
<div style="position:absolute;left:481px;top:655px;width:1px;height:30px;background:#e1e4e8;"></div>
<div style="position:absolute;left:482px;top:655px;width:52px;height:30px;background:#ffffff;"></div>
<div style="position:absolute;left:534px;top:655px;width:1px;height:30px;background:#e1e4e8;"></div>
<div style="position:absolute;left:535px;top:655px;width:905px;height:30px;background:#ffffff;"></div>
<div style="position:absolute;left:375px;top:685px;width:24px;height:30px;background:#e1e4e8;"></div>
<div style="position:absolute;left:399px;top:685px;width:82px;height:30px;background:#ffffff;"></div>
<div style="position:absolute;left:481px;top:685px;width:1px;height:30px;background:#e1e4e8;"></div>
<div style="position:absolute;left:482px;top:685px;width:52px;height:30px;background:#ffffff;"></div>
<div style="position:absolute;left:534px;top:685px;width:1px;height:30px;background:#e1e4e8;"></div>
<div style="position:absolute;left:535px;top:685px;width:905px;height:30px;background:#ffffff;"></div>
<div style="position:absolute;left:375px;top:715px;width:24px;height:30px;background:#e1e4e8;"></div>
<div style="position:absolute;left:399px;top:715px;width:82px;height:30px;background:#ffffff;"></div>
<div style="position:absolute;left:481px;top:715px;width:1px;height:30px;background:#e1e4e8;"></div>
<div style="position:absolute;left:482px;top:715px;width:52px;height:30px;background:#ffffff;"></div>
<div style="position:absolute;left:534px;top:715px;width:1px;height:30px;background:#e1e4e8;"></div>
<div style="position:absolute;left:535px;top:715px;width:905px;height:30px;background:#ffffff;"></div>
<div style="position:absolute;left:375px;top:745px;width:24px;height:30px;background:#0361d0;"></div>
<div style="position:absolute;left:399px;top:745px;width:82px;height:30px;background:#0788ff;"></div>
<div style="position:absolute;left:481px;top:745px;width:1px;height:30px;background:#0a62cc;"></div>
<div style="position:absolute;left:482px;top:745px;width:52px;height:30px;background:#0788ff;"></div>
<div style="position:absolute;left:535px;top:745px;width:905px;height:30px;background:#e6ffed;"></div>
<svg style="position:absolute;left:400px;top:745px;" width="24" height="30" viewBox="0 0 24 30"><path d="M6.6 14.8L10.7 18.7L19.3 9.6" fill="none" stroke="#fff" stroke-width="2.5" stroke-linecap="round" stroke-linejoin="round"/></svg>
<div style="position:absolute;left:375px;top:775px;width:24px;height:30px;background:#0361d0;"></div>
<div style="position:absolute;left:399px;top:775px;width:82px;height:30px;background:#76b6fb;"></div>
<div style="position:absolute;left:481px;top:775px;width:1px;height:30px;background:#5a9ee8;"></div>
<div style="position:absolute;left:482px;top:775px;width:52px;height:30px;background:#76b6fb;"></div>
<div style="position:absolute;left:535px;top:775px;width:905px;height:30px;background:#e6ffed;"></div>
<svg style="position:absolute;left:400px;top:775px;" width="24" height="30" viewBox="0 0 24 30"><path d="M6.6 14.8L10.7 18.7L19.3 9.6" fill="none" stroke="#fff" stroke-width="2.5" stroke-linecap="round" stroke-linejoin="round"/></svg>
<div style="position:absolute;left:375px;top:805px;width:24px;height:30px;background:#0361d0;"></div>
<div style="position:absolute;left:399px;top:805px;width:82px;height:30px;background:#0788ff;"></div>
<div style="position:absolute;left:481px;top:805px;width:1px;height:30px;background:#0a62cc;"></div>
<div style="position:absolute;left:482px;top:805px;width:52px;height:30px;background:#0788ff;"></div>
<div style="position:absolute;left:535px;top:805px;width:905px;height:30px;background:#e6ffed;"></div>
<svg style="position:absolute;left:400px;top:805px;" width="24" height="30" viewBox="0 0 24 30"><path d="M6.6 14.8L10.7 18.7L19.3 9.6" fill="none" stroke="#fff" stroke-width="2.5" stroke-linecap="round" stroke-linejoin="round"/></svg>
<div style="position:absolute;left:375px;top:835px;width:24px;height:30px;background:#0361d0;"></div>
<div style="position:absolute;left:399px;top:835px;width:82px;height:30px;background:#0788ff;"></div>
<div style="position:absolute;left:481px;top:835px;width:1px;height:30px;background:#0a62cc;"></div>
<div style="position:absolute;left:482px;top:835px;width:52px;height:30px;background:#0788ff;"></div>
<div style="position:absolute;left:535px;top:835px;width:905px;height:30px;background:#e6ffed;"></div>
<svg style="position:absolute;left:400px;top:835px;" width="24" height="30" viewBox="0 0 24 30"><path d="M6.6 14.8L10.7 18.7L19.3 9.6" fill="none" stroke="#fff" stroke-width="2.5" stroke-linecap="round" stroke-linejoin="round"/></svg>
<div style="position:absolute;left:375px;top:865px;width:24px;height:30px;background:#0361d0;"></div>
<div style="position:absolute;left:399px;top:865px;width:82px;height:30px;background:#0788ff;"></div>
<div style="position:absolute;left:481px;top:865px;width:1px;height:30px;background:#0a62cc;"></div>
<div style="position:absolute;left:482px;top:865px;width:52px;height:30px;background:#0788ff;"></div>
<div style="position:absolute;left:535px;top:865px;width:905px;height:30px;background:#e6ffed;"></div>
<svg style="position:absolute;left:400px;top:865px;" width="24" height="30" viewBox="0 0 24 30"><path d="M6.6 14.8L10.7 18.7L19.3 9.6" fill="none" stroke="#fff" stroke-width="2.5" stroke-linecap="round" stroke-linejoin="round"/></svg>
<div style="position:absolute;left:375px;top:895px;width:24px;height:30px;background:#0361d0;"></div>
<div style="position:absolute;left:399px;top:895px;width:82px;height:30px;background:#0788ff;"></div>
<div style="position:absolute;left:481px;top:895px;width:1px;height:30px;background:#0a62cc;"></div>
<div style="position:absolute;left:482px;top:895px;width:52px;height:30px;background:#0788ff;"></div>
<div style="position:absolute;left:535px;top:895px;width:905px;height:30px;background:#e6ffed;"></div>
<svg style="position:absolute;left:400px;top:895px;" width="24" height="30" viewBox="0 0 24 30"><path d="M6.6 14.8L10.7 18.7L19.3 9.6" fill="none" stroke="#fff" stroke-width="2.5" stroke-linecap="round" stroke-linejoin="round"/></svg>
<div style="position:absolute;left:375px;top:925px;width:24px;height:30px;background:#0361d0;"></div>
<div style="position:absolute;left:399px;top:925px;width:82px;height:30px;background:#0788ff;"></div>
<div style="position:absolute;left:481px;top:925px;width:1px;height:30px;background:#0a62cc;"></div>
<div style="position:absolute;left:482px;top:925px;width:52px;height:30px;background:#0788ff;"></div>
<div style="position:absolute;left:535px;top:925px;width:905px;height:30px;background:#e6ffed;"></div>
<svg style="position:absolute;left:400px;top:925px;" width="24" height="30" viewBox="0 0 24 30"><path d="M6.6 14.8L10.7 18.7L19.3 9.6" fill="none" stroke="#fff" stroke-width="2.5" stroke-linecap="round" stroke-linejoin="round"/></svg>
<div style="position:absolute;left:375px;top:955px;width:24px;height:30px;background:#0361d0;"></div>
<div style="position:absolute;left:399px;top:955px;width:82px;height:30px;background:#0788ff;"></div>
<div style="position:absolute;left:481px;top:955px;width:1px;height:30px;background:#0a62cc;"></div>
<div style="position:absolute;left:482px;top:955px;width:52px;height:30px;background:#0788ff;"></div>
<div style="position:absolute;left:535px;top:955px;width:905px;height:30px;background:#e6ffed;"></div>
<svg style="position:absolute;left:400px;top:955px;" width="24" height="30" viewBox="0 0 24 30"><path d="M6.6 14.8L10.7 18.7L19.3 9.6" fill="none" stroke="#fff" stroke-width="2.5" stroke-linecap="round" stroke-linejoin="round"/></svg>
<div style="position:absolute;left:375px;top:985px;width:24px;height:30px;background:#0361d0;"></div>
<div style="position:absolute;left:399px;top:985px;width:82px;height:30px;background:#0788ff;"></div>
<div style="position:absolute;left:481px;top:985px;width:1px;height:30px;background:#0a62cc;"></div>
<div style="position:absolute;left:482px;top:985px;width:52px;height:30px;background:#0788ff;"></div>
<div style="position:absolute;left:535px;top:985px;width:905px;height:30px;background:#e6ffed;"></div>
<svg style="position:absolute;left:400px;top:985px;" width="24" height="30" viewBox="0 0 24 30"><path d="M6.6 14.8L10.7 18.7L19.3 9.6" fill="none" stroke="#fff" stroke-width="2.5" stroke-linecap="round" stroke-linejoin="round"/></svg>
<div style="position:absolute;left:375px;top:1015px;width:24px;height:30px;background:#0361d0;"></div>
<div style="position:absolute;left:399px;top:1015px;width:82px;height:30px;background:#0788ff;"></div>
<div style="position:absolute;left:481px;top:1015px;width:1px;height:30px;background:#0a62cc;"></div>
<div style="position:absolute;left:482px;top:1015px;width:52px;height:30px;background:#0788ff;"></div>
<div style="position:absolute;left:535px;top:1015px;width:905px;height:30px;background:#e6ffed;"></div>
<svg style="position:absolute;left:400px;top:1015px;" width="24" height="30" viewBox="0 0 24 30"><path d="M6.6 14.8L10.7 18.7L19.3 9.6" fill="none" stroke="#fff" stroke-width="2.5" stroke-linecap="round" stroke-linejoin="round"/></svg>
<svg style="position:absolute;left:375px;top:346px;" width="24" height="30" viewBox="0 0 24 30"><path d="M5.7 14.8L9.6 18.7L18.2 9.6" fill="none" stroke="#fff" stroke-width="2.5" stroke-linecap="round" stroke-linejoin="round"/></svg>
<svg style="position:absolute;left:375px;top:745px;" width="24" height="30" viewBox="0 0 24 30"><path d="M5.7 14.8L9.6 18.7L18.2 9.6" fill="none" stroke="#fff" stroke-width="2.5" stroke-linecap="round" stroke-linejoin="round"/></svg>
<div id="t0" style="position:absolute;left:68.70px;top:11.69px;font-family:'Liberation Sans', sans-serif;font-size:19.5px;line-height:19.5px;font-weight:400;color:#a3a7ab;white-space:pre;letter-spacing:-0.207px;">File</div>
<div id="t1" style="position:absolute;left:127.80px;top:11.69px;font-family:'Liberation Sans', sans-serif;font-size:19.5px;line-height:19.5px;font-weight:400;color:#a3a7ab;white-space:pre;letter-spacing:0.330px;">Edit</div>
<div id="t2" style="position:absolute;left:189.80px;top:11.69px;font-family:'Liberation Sans', sans-serif;font-size:19.5px;line-height:19.5px;font-weight:400;color:#a3a7ab;white-space:pre;letter-spacing:0.659px;">View</div>
<div id="t3" style="position:absolute;left:262.00px;top:11.69px;font-family:'Liberation Sans', sans-serif;font-size:19.5px;line-height:19.5px;font-weight:400;color:#a3a7ab;white-space:pre;letter-spacing:0.131px;">Repository</div>
<div id="t4" style="position:absolute;left:384.70px;top:11.69px;font-family:'Liberation Sans', sans-serif;font-size:19.5px;line-height:19.5px;font-weight:400;color:#a3a7ab;white-space:pre;letter-spacing:-0.239px;">Branch</div>
<div id="t5" style="position:absolute;left:474.20px;top:11.69px;font-family:'Liberation Sans', sans-serif;font-size:19.5px;line-height:19.5px;font-weight:400;color:#a3a7ab;white-space:pre;letter-spacing:0.297px;">Help</div>
<div id="t6" style="position:absolute;left:53.50px;top:59.51px;font-family:'Liberation Sans', sans-serif;font-size:17px;line-height:17px;font-weight:400;color:#d6dadf;white-space:pre;letter-spacing:0.526px;">Current repository</div>
<div id="t7" style="position:absolute;left:53.50px;top:80.56px;font-family:'Liberation Sans', sans-serif;font-size:18px;line-height:18px;font-weight:700;color:#ffffff;white-space:pre;letter-spacing:0.426px;">DansBlog</div>
<div id="t8" style="position:absolute;left:428.50px;top:59.41px;font-family:'Liberation Sans', sans-serif;font-size:17px;line-height:17px;font-weight:400;color:#d6dadf;white-space:pre;letter-spacing:0.470px;">Current branch</div>
<div id="t9" style="position:absolute;left:428.50px;top:80.36px;font-family:'Liberation Sans', sans-serif;font-size:18px;line-height:18px;font-weight:700;color:#ffffff;white-space:pre;letter-spacing:1.328px;">main</div>
<div id="t10" style="position:absolute;left:773.80px;top:59.56px;font-family:'Liberation Sans', sans-serif;font-size:18px;line-height:18px;font-weight:700;color:#ffffff;white-space:pre;letter-spacing:0.500px;">Fetch origin</div>
<div id="t11" style="position:absolute;left:773.80px;top:81.81px;font-family:'Liberation Sans', sans-serif;font-size:17px;line-height:17px;font-weight:400;color:#d6dadf;white-space:pre;letter-spacing:0.381px;">Last fetched 12 minutes ago</div>
<div id="t12" style="position:absolute;left:41.00px;top:130.54px;font-family:'Liberation Sans', sans-serif;font-size:18.5px;line-height:18.5px;font-weight:400;color:#24292e;white-space:pre;letter-spacing:-0.010px;">Changes</div>
<div id="t13" style="position:absolute;left:128.50px;top:131.80px;font-family:'Liberation Sans', sans-serif;font-size:15px;line-height:15px;font-weight:700;color:#24292e;white-space:pre;letter-spacing:0.656px;">9</div>
<div id="t14" style="position:absolute;left:249.50px;top:130.84px;font-family:'Liberation Sans', sans-serif;font-size:18.5px;line-height:18.5px;font-weight:400;color:#24292e;white-space:pre;letter-spacing:0.906px;">History</div>
<div id="t15" style="position:absolute;left:95.00px;top:178.84px;font-family:'Liberation Sans', sans-serif;font-size:18.5px;line-height:18.5px;font-weight:400;color:#6a737d;white-space:pre;letter-spacing:0.375px;">Filter</div>
<div id="t16" style="position:absolute;left:45.00px;top:218.14px;font-family:'Liberation Sans', sans-serif;font-size:18.5px;line-height:18.5px;font-weight:400;color:#24292e;white-space:pre;letter-spacing:0.396px;">9 changed files</div>
<div id="t17" style="position:absolute;left:45.00px;top:263.34px;font-family:'Liberation Sans', sans-serif;font-size:18.5px;line-height:18.5px;font-weight:400;color:#24292e;white-space:pre;letter-spacing:0.531px;"><span style="color:#6a737d">src\components\</span>Toc.astro</div>
<div id="t18" style="position:absolute;left:45.00px;top:306.84px;font-family:'Liberation Sans', sans-serif;font-size:18.5px;line-height:18.5px;font-weight:400;color:#24292e;white-space:pre;letter-spacing:0.375px;"><span style="color:#6a737d">src\compone...\</span>TocDrawer.astro</div>
<div id="t19" style="position:absolute;left:45.00px;top:350.34px;font-family:'Liberation Sans', sans-serif;font-size:18.5px;line-height:18.5px;font-weight:400;color:#24292e;white-space:pre;letter-spacing:0.738px;"><span style="color:#6a737d">src\content\bl...</span>onal-blog-cn.md</div>
<div id="t20" style="position:absolute;left:45.00px;top:393.84px;font-family:'Liberation Sans', sans-serif;font-size:18.5px;line-height:18.5px;font-weight:400;color:#24292e;white-space:pre;letter-spacing:0.738px;"><span style="color:#6a737d">src\content\blog\h...\</span>step1.png</div>
<div id="t21" style="position:absolute;left:45.00px;top:437.34px;font-family:'Liberation Sans', sans-serif;font-size:18.5px;line-height:18.5px;font-weight:400;color:#24292e;white-space:pre;letter-spacing:0.738px;"><span style="color:#6a737d">src\content\blog\h...\</span>step2.png</div>
<div id="t22" style="position:absolute;left:45.00px;top:480.84px;font-family:'Liberation Sans', sans-serif;font-size:18.5px;line-height:18.5px;font-weight:400;color:#24292e;white-space:pre;letter-spacing:0.738px;"><span style="color:#6a737d">src\content\blog\h...\</span>step3.png</div>
<div id="t23" style="position:absolute;left:45.00px;top:524.34px;font-family:'Liberation Sans', sans-serif;font-size:18.5px;line-height:18.5px;font-weight:400;color:#24292e;white-space:pre;letter-spacing:0.364px;"><span style="color:#6a737d">src\layouts\</span>BlogPost.astro</div>
<div id="t24" style="position:absolute;left:45.00px;top:567.84px;font-family:'Liberation Sans', sans-serif;font-size:18.5px;line-height:18.5px;font-weight:400;color:#24292e;white-space:pre;letter-spacing:0.470px;"><span style="color:#6a737d">src\pages\blog\</span>[...slug].astro</div>
<div id="t25" style="position:absolute;left:45.00px;top:611.34px;font-family:'Liberation Sans', sans-serif;font-size:18.5px;line-height:18.5px;font-weight:400;color:#24292e;white-space:pre;letter-spacing:0.275px;">src\styles\global.css</div>
<div id="t26" style="position:absolute;left:68.00px;top:756.34px;font-family:'Liberation Sans', sans-serif;font-size:18.5px;line-height:18.5px;font-weight:400;color:#6a737d;white-space:pre;letter-spacing:0.500px;">Summary (required)</div>
<div id="t27" style="position:absolute;left:23.50px;top:811.04px;font-family:'Liberation Sans', sans-serif;font-size:18.5px;line-height:18.5px;font-weight:400;color:#6a737d;white-space:pre;letter-spacing:0.545px;">Description</div>
<div id="t28" style="position:absolute;left:115.00px;top:940.58px;font-family:'Liberation Sans', sans-serif;font-size:15.5px;line-height:15.5px;font-weight:700;color:#1a9a45;white-space:pre;letter-spacing:-0.188px;">New</div>
<div id="t29" style="position:absolute;left:88.00px;top:1001.64px;font-family:'Liberation Sans', sans-serif;font-size:18.5px;line-height:18.5px;font-weight:400;color:#ffffff;white-space:pre;letter-spacing:0.567px;">Commit 9 files to <b>main</b></div>
<div id="t30" style="position:absolute;left:390.00px;top:130.94px;font-family:'Liberation Sans', sans-serif;font-size:18.5px;line-height:18.5px;font-weight:400;color:#24292e;white-space:pre;letter-spacing:0.325px;"><span style="color:#586069">src\styles\</span>global.css</div>
<div id="t31" style="position:absolute;left:445.00px;top:181.51px;font-family:'Liberation Sans', sans-serif;font-size:19px;line-height:19px;font-weight:400;color:#24292e;white-space:pre;letter-spacing:0.095px;">This diff contains a change in line endings from 'LF' to 'CRLF'.</div>
<div id="t32" style="position:absolute;left:580.30px;top:231.76px;font-family:'Liberation Mono', monospace;font-size:15.2px;line-height:15.2px;font-weight:400;color:#6a737d;white-space:pre;letter-spacing:0.000px;">@@ -13,7 +13,10 @@</div>
<div id="t33" style="position:absolute;left:454.30px;top:263.94px;font-family:'Liberation Mono', monospace;font-size:16px;line-height:16px;font-weight:400;color:#57606a;white-space:pre;letter-spacing:0.000px;">13</div>
<div id="t34" style="position:absolute;left:507.30px;top:263.94px;font-family:'Liberation Mono', monospace;font-size:16px;line-height:16px;font-weight:400;color:#57606a;white-space:pre;letter-spacing:0.000px;">13</div>
<div id="t35" style="position:absolute;left:553.00px;top:264.36px;font-family:'Liberation Mono', monospace;font-size:15.2px;line-height:15.2px;font-weight:400;color:#24292e;white-space:pre;letter-spacing:0.000px;">           }</div>
<div id="t36" style="position:absolute;left:454.30px;top:293.94px;font-family:'Liberation Mono', monospace;font-size:16px;line-height:16px;font-weight:400;color:#57606a;white-space:pre;letter-spacing:0.000px;">14</div>
<div id="t37" style="position:absolute;left:507.30px;top:293.94px;font-family:'Liberation Mono', monospace;font-size:16px;line-height:16px;font-weight:400;color:#57606a;white-space:pre;letter-spacing:0.000px;">14</div>
<div id="t38" style="position:absolute;left:553.00px;top:294.36px;font-family:'Liberation Mono', monospace;font-size:15.2px;line-height:15.2px;font-weight:400;color:#24292e;white-space:pre;letter-spacing:0.000px;">   </div>
<div id="t39" style="position:absolute;left:454.30px;top:323.94px;font-family:'Liberation Mono', monospace;font-size:16px;line-height:16px;font-weight:400;color:#57606a;white-space:pre;letter-spacing:0.000px;">15</div>
<div id="t40" style="position:absolute;left:507.30px;top:323.94px;font-family:'Liberation Mono', monospace;font-size:16px;line-height:16px;font-weight:400;color:#57606a;white-space:pre;letter-spacing:0.000px;">15</div>
<div id="t41" style="position:absolute;left:553.00px;top:324.36px;font-family:'Liberation Mono', monospace;font-size:15.2px;line-height:15.2px;font-weight:400;color:#24292e;white-space:pre;letter-spacing:0.000px;">           <span style="color:#005cc5">html</span> {</div>
<div id="t42" style="position:absolute;left:454.30px;top:353.94px;font-family:'Liberation Mono', monospace;font-size:16px;line-height:16px;font-weight:400;color:#ffffff;white-space:pre;letter-spacing:0.000px;">16</div>
<div id="t43" style="position:absolute;left:553.00px;top:354.36px;font-family:'Liberation Mono', monospace;font-size:15.2px;line-height:15.2px;font-weight:400;color:#24292e;white-space:pre;letter-spacing:0.000px;">-                  <span style="color:#005cc5">scroll-behavior</span>: <span style="color:#6f42c1">smooth</span>;</div>
<div id="t44" style="position:absolute;left:507.30px;top:383.94px;font-family:'Liberation Mono', monospace;font-size:16px;line-height:16px;font-weight:400;color:#ffffff;white-space:pre;letter-spacing:0.000px;">16</div>
<div id="t45" style="position:absolute;left:553.00px;top:384.36px;font-family:'Liberation Mono', monospace;font-size:15.2px;line-height:15.2px;font-weight:400;color:#24292e;white-space:pre;letter-spacing:0.000px;">+                  <span style="color:#005cc5">scroll-behavior</span>: <span style="color:#005cc5">auto</span>;</div>
<div id="t46" style="position:absolute;left:507.30px;top:413.94px;font-family:'Liberation Mono', monospace;font-size:16px;line-height:16px;font-weight:400;color:#ffffff;white-space:pre;letter-spacing:0.000px;">17</div>
<div id="t47" style="position:absolute;left:553.00px;top:414.36px;font-family:'Liberation Mono', monospace;font-size:15.2px;line-height:15.2px;font-weight:400;color:#24292e;white-space:pre;letter-spacing:0.000px;">+                  <span style="color:#005cc5">scrollbar-gutter</span>: <span style="color:#6f42c1">stable</span>;</div>
<div id="t48" style="position:absolute;left:507.30px;top:443.94px;font-family:'Liberation Mono', monospace;font-size:16px;line-height:16px;font-weight:400;color:#ffffff;white-space:pre;letter-spacing:0.000px;">18</div>
<div id="t49" style="position:absolute;left:553.00px;top:444.36px;font-family:'Liberation Mono', monospace;font-size:15.2px;line-height:15.2px;font-weight:400;color:#24292e;white-space:pre;letter-spacing:0.000px;">+                  <span style="color:#005cc5">scrollbar-width</span>: <span style="color:#005cc5">thin</span>;</div>
<div id="t50" style="position:absolute;left:507.30px;top:473.94px;font-family:'Liberation Mono', monospace;font-size:16px;line-height:16px;font-weight:400;color:#ffffff;white-space:pre;letter-spacing:0.000px;">19</div>
<div id="t51" style="position:absolute;left:553.00px;top:474.36px;font-family:'Liberation Mono', monospace;font-size:15.2px;line-height:15.2px;font-weight:400;color:#24292e;white-space:pre;letter-spacing:0.000px;">+                  <span style="color:#005cc5">scrollbar-color</span>: <span style="color:#6f42c1">rgba</span>(120, 120, 120, 0.28) <span style="color:#005cc5">transparent</span>;</div>
<div id="t52" style="position:absolute;left:454.30px;top:503.94px;font-family:'Liberation Mono', monospace;font-size:16px;line-height:16px;font-weight:400;color:#57606a;white-space:pre;letter-spacing:0.000px;">17</div>
<div id="t53" style="position:absolute;left:507.30px;top:503.94px;font-family:'Liberation Mono', monospace;font-size:16px;line-height:16px;font-weight:400;color:#57606a;white-space:pre;letter-spacing:0.000px;">20</div>
<div id="t54" style="position:absolute;left:553.00px;top:504.36px;font-family:'Liberation Mono', monospace;font-size:15.2px;line-height:15.2px;font-weight:400;color:#24292e;white-space:pre;letter-spacing:0.000px;">           }</div>
<div id="t55" style="position:absolute;left:454.30px;top:533.94px;font-family:'Liberation Mono', monospace;font-size:16px;line-height:16px;font-weight:400;color:#57606a;white-space:pre;letter-spacing:0.000px;">18</div>
<div id="t56" style="position:absolute;left:507.30px;top:533.94px;font-family:'Liberation Mono', monospace;font-size:16px;line-height:16px;font-weight:400;color:#57606a;white-space:pre;letter-spacing:0.000px;">21</div>
<div id="t57" style="position:absolute;left:553.00px;top:534.36px;font-family:'Liberation Mono', monospace;font-size:15.2px;line-height:15.2px;font-weight:400;color:#24292e;white-space:pre;letter-spacing:0.000px;">   </div>
<div id="t58" style="position:absolute;left:454.30px;top:563.94px;font-family:'Liberation Mono', monospace;font-size:16px;line-height:16px;font-weight:400;color:#57606a;white-space:pre;letter-spacing:0.000px;">19</div>
<div id="t59" style="position:absolute;left:507.30px;top:563.94px;font-family:'Liberation Mono', monospace;font-size:16px;line-height:16px;font-weight:400;color:#57606a;white-space:pre;letter-spacing:0.000px;">22</div>
<div id="t60" style="position:absolute;left:553.00px;top:564.36px;font-family:'Liberation Mono', monospace;font-size:15.2px;line-height:15.2px;font-weight:400;color:#24292e;white-space:pre;letter-spacing:0.000px;">           <span style="color:#005cc5">body</span> {</div>
<div id="t61" style="position:absolute;left:580.30px;top:613.76px;font-family:'Liberation Mono', monospace;font-size:15.2px;line-height:15.2px;font-weight:400;color:#6a737d;white-space:pre;letter-spacing:0.000px;">@@ -75,6 +78,38 @@</div>
<div id="t62" style="position:absolute;left:454.30px;top:662.94px;font-family:'Liberation Mono', monospace;font-size:16px;line-height:16px;font-weight:400;color:#57606a;white-space:pre;letter-spacing:0.000px;">75</div>
<div id="t63" style="position:absolute;left:507.30px;top:662.94px;font-family:'Liberation Mono', monospace;font-size:16px;line-height:16px;font-weight:400;color:#57606a;white-space:pre;letter-spacing:0.000px;">78</div>
<div id="t64" style="position:absolute;left:553.00px;top:663.36px;font-family:'Liberation Mono', monospace;font-size:15.2px;line-height:15.2px;font-weight:400;color:#24292e;white-space:pre;letter-spacing:0.000px;">           }</div>
<div id="t65" style="position:absolute;left:454.30px;top:692.94px;font-family:'Liberation Mono', monospace;font-size:16px;line-height:16px;font-weight:400;color:#57606a;white-space:pre;letter-spacing:0.000px;">76</div>
<div id="t66" style="position:absolute;left:507.30px;top:692.94px;font-family:'Liberation Mono', monospace;font-size:16px;line-height:16px;font-weight:400;color:#57606a;white-space:pre;letter-spacing:0.000px;">79</div>
<div id="t67" style="position:absolute;left:553.00px;top:693.36px;font-family:'Liberation Mono', monospace;font-size:15.2px;line-height:15.2px;font-weight:400;color:#24292e;white-space:pre;letter-spacing:0.000px;">   }</div>
<div id="t68" style="position:absolute;left:454.30px;top:722.94px;font-family:'Liberation Mono', monospace;font-size:16px;line-height:16px;font-weight:400;color:#57606a;white-space:pre;letter-spacing:0.000px;">77</div>
<div id="t69" style="position:absolute;left:507.30px;top:722.94px;font-family:'Liberation Mono', monospace;font-size:16px;line-height:16px;font-weight:400;color:#57606a;white-space:pre;letter-spacing:0.000px;">80</div>
<div id="t70" style="position:absolute;left:553.00px;top:723.36px;font-family:'Liberation Mono', monospace;font-size:15.2px;line-height:15.2px;font-weight:400;color:#24292e;white-space:pre;letter-spacing:0.000px;">   </div>
<div id="t71" style="position:absolute;left:507.30px;top:752.94px;font-family:'Liberation Mono', monospace;font-size:16px;line-height:16px;font-weight:400;color:#ffffff;white-space:pre;letter-spacing:0.000px;">81</div>
<div id="t72" style="position:absolute;left:553.00px;top:753.36px;font-family:'Liberation Mono', monospace;font-size:15.2px;line-height:15.2px;font-weight:400;color:#24292e;white-space:pre;letter-spacing:0.000px;">+  <span style="color:#22863a">html</span><span style="color:#6a737d">::-webkit-</span>scrollbar {</div>
<div id="t73" style="position:absolute;left:507.30px;top:782.94px;font-family:'Liberation Mono', monospace;font-size:16px;line-height:16px;font-weight:400;color:#ffffff;white-space:pre;letter-spacing:0.000px;">82</div>
<div id="t74" style="position:absolute;left:553.00px;top:783.36px;font-family:'Liberation Mono', monospace;font-size:15.2px;line-height:15.2px;font-weight:400;color:#24292e;white-space:pre;letter-spacing:0.000px;">+          <span style="color:#005cc5">width</span>: 10px;</div>
<div id="t75" style="position:absolute;left:507.30px;top:812.94px;font-family:'Liberation Mono', monospace;font-size:16px;line-height:16px;font-weight:400;color:#ffffff;white-space:pre;letter-spacing:0.000px;">83</div>
<div id="t76" style="position:absolute;left:553.00px;top:813.36px;font-family:'Liberation Mono', monospace;font-size:15.2px;line-height:15.2px;font-weight:400;color:#24292e;white-space:pre;letter-spacing:0.000px;">+          <span style="color:#005cc5">height</span>: 10px;</div>
<div id="t77" style="position:absolute;left:507.30px;top:842.94px;font-family:'Liberation Mono', monospace;font-size:16px;line-height:16px;font-weight:400;color:#ffffff;white-space:pre;letter-spacing:0.000px;">84</div>
<div id="t78" style="position:absolute;left:553.00px;top:843.36px;font-family:'Liberation Mono', monospace;font-size:15.2px;line-height:15.2px;font-weight:400;color:#24292e;white-space:pre;letter-spacing:0.000px;">+  }</div>
<div id="t79" style="position:absolute;left:507.30px;top:872.94px;font-family:'Liberation Mono', monospace;font-size:16px;line-height:16px;font-weight:400;color:#ffffff;white-space:pre;letter-spacing:0.000px;">85</div>
<div id="t80" style="position:absolute;left:553.00px;top:873.36px;font-family:'Liberation Mono', monospace;font-size:15.2px;line-height:15.2px;font-weight:400;color:#24292e;white-space:pre;letter-spacing:0.000px;">+  </div>
<div id="t81" style="position:absolute;left:507.30px;top:902.94px;font-family:'Liberation Mono', monospace;font-size:16px;line-height:16px;font-weight:400;color:#ffffff;white-space:pre;letter-spacing:0.000px;">86</div>
<div id="t82" style="position:absolute;left:553.00px;top:903.36px;font-family:'Liberation Mono', monospace;font-size:15.2px;line-height:15.2px;font-weight:400;color:#24292e;white-space:pre;letter-spacing:0.000px;">+  <span style="color:#22863a">html</span><span style="color:#6a737d">::-webkit-</span>scrollbar-track {</div>
<div id="t83" style="position:absolute;left:507.30px;top:932.94px;font-family:'Liberation Mono', monospace;font-size:16px;line-height:16px;font-weight:400;color:#ffffff;white-space:pre;letter-spacing:0.000px;">87</div>
<div id="t84" style="position:absolute;left:553.00px;top:933.36px;font-family:'Liberation Mono', monospace;font-size:15.2px;line-height:15.2px;font-weight:400;color:#24292e;white-space:pre;letter-spacing:0.000px;">+          <span style="color:#005cc5">background</span>: <span style="color:#005cc5">transparent</span>;</div>
<div id="t85" style="position:absolute;left:507.30px;top:962.94px;font-family:'Liberation Mono', monospace;font-size:16px;line-height:16px;font-weight:400;color:#ffffff;white-space:pre;letter-spacing:0.000px;">88</div>
<div id="t86" style="position:absolute;left:553.00px;top:963.36px;font-family:'Liberation Mono', monospace;font-size:15.2px;line-height:15.2px;font-weight:400;color:#24292e;white-space:pre;letter-spacing:0.000px;">+  }</div>
<div id="t87" style="position:absolute;left:507.30px;top:992.94px;font-family:'Liberation Mono', monospace;font-size:16px;line-height:16px;font-weight:400;color:#ffffff;white-space:pre;letter-spacing:0.000px;">89</div>
<div id="t88" style="position:absolute;left:553.00px;top:993.36px;font-family:'Liberation Mono', monospace;font-size:15.2px;line-height:15.2px;font-weight:400;color:#24292e;white-space:pre;letter-spacing:0.000px;">+  </div>
<div id="t89" style="position:absolute;left:507.30px;top:1022.94px;font-family:'Liberation Mono', monospace;font-size:16px;line-height:16px;font-weight:400;color:#ffffff;white-space:pre;letter-spacing:0.000px;">90</div>
<div id="t90" style="position:absolute;left:553.00px;top:1023.36px;font-family:'Liberation Mono', monospace;font-size:15.2px;line-height:15.2px;font-weight:400;color:#24292e;white-space:pre;letter-spacing:0.000px;">+  <span style="color:#22863a">html</span><span style="color:#6a737d">::-webkit-</span>scrollbar-thumb {</div>
</div></div></body></html>
